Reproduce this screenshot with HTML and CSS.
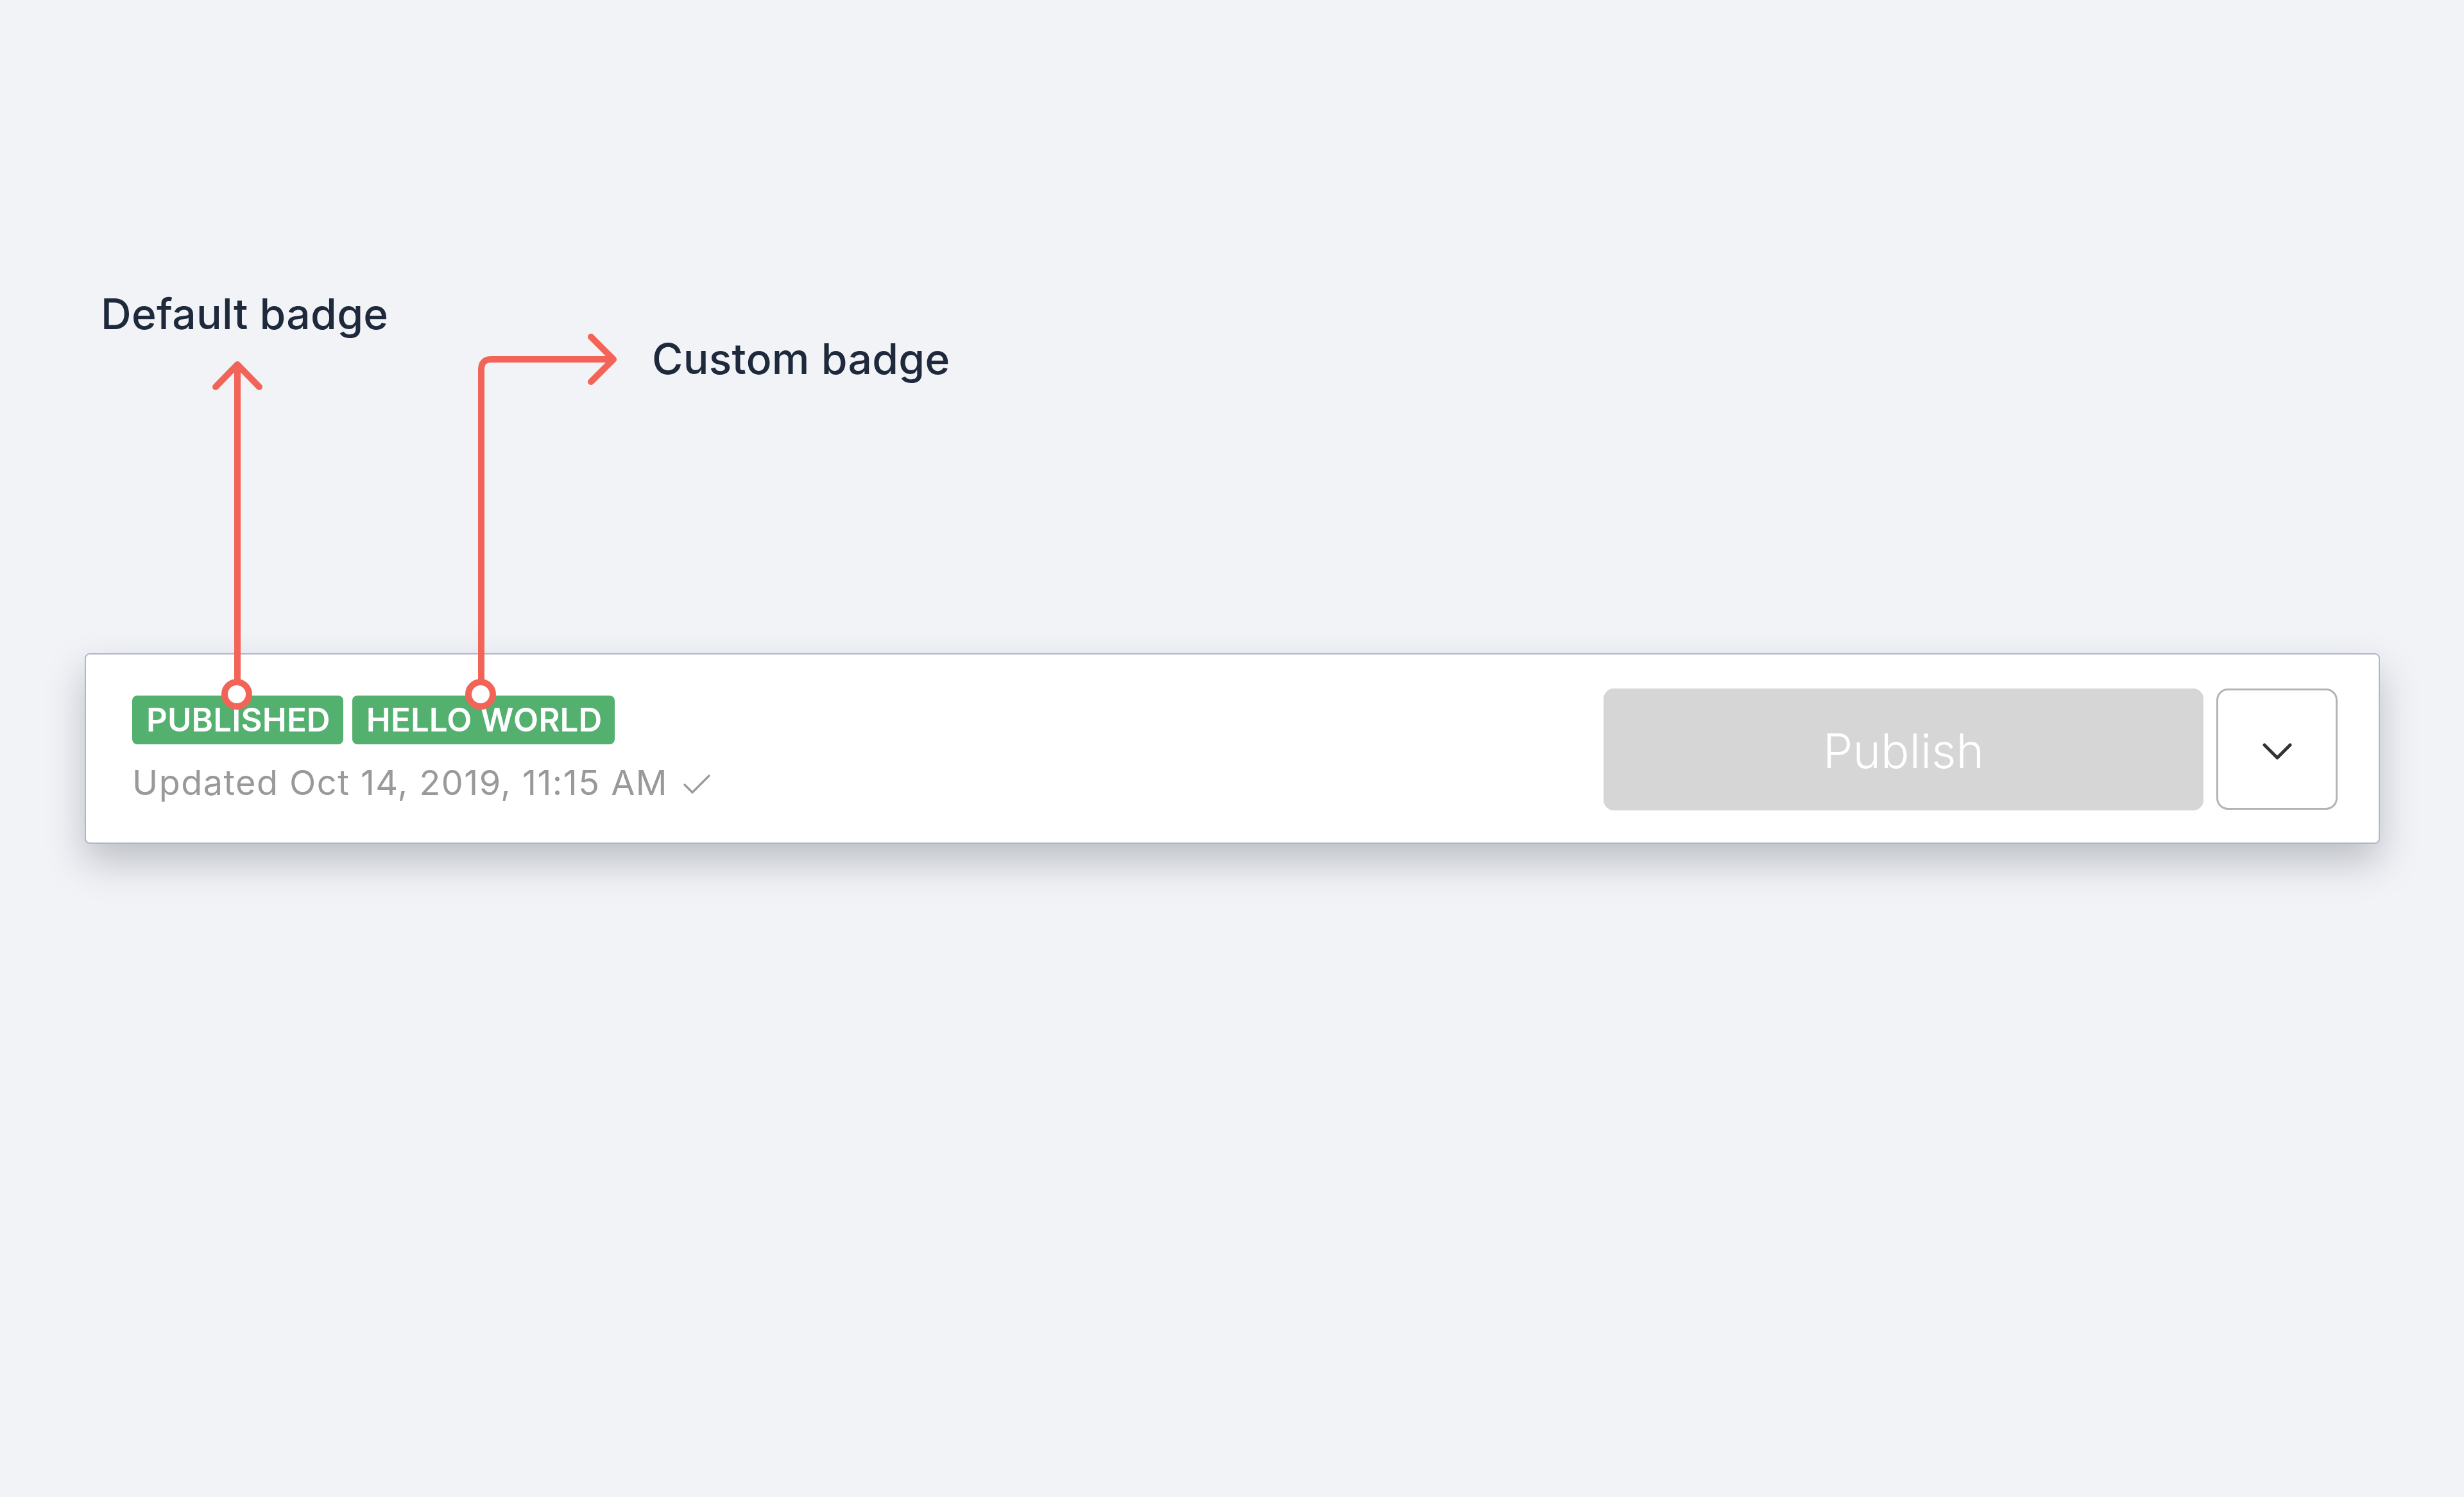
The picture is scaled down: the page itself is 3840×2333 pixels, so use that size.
FILE: index.html
```html
<!DOCTYPE html>
<html lang="en">
<head>
<meta charset="utf-8">
<title>Badges</title>
<link rel="stylesheet" href="styles.css">
</head>
<body>
<main class="canvas">
  <section class="toolbar">
    <div class="status">
      <div class="badges">
        <span class="badge">PUBLISHED</span>
        <span class="badge">HELLO WORLD</span>
      </div>
      <div class="updated">Updated Oct 14, 2019, 11:15 AM<svg class="check" width="44" height="32" viewBox="0 0 44 32"><polyline points="4,17 16,29 42,3" fill="none" stroke="#9a9a9a" stroke-width="3.2" stroke-linecap="round" stroke-linejoin="round"/></svg></div>
    </div>
    <div class="actions">
      <button class="publish" type="button">Publish</button>
      <button class="more" type="button" aria-label="More options"><svg width="48" height="28" viewBox="0 0 48 28"><polyline points="4,4 24,24 44,4" fill="none" stroke="#333" stroke-width="5" stroke-linecap="round" stroke-linejoin="round"/></svg></button>
    </div>
  </section>

  <div class="annotations">
    <span class="label label-default">Default badge</span>
    <span class="label label-custom">Custom badge</span>
    <svg class="arrows" width="3840" height="2333" viewBox="0 0 3840 2333">
      <g fill="none" stroke="#f26457" stroke-width="10" stroke-linecap="round" stroke-linejoin="round">
        <path d="M370 1064 V570"/>
        <polyline points="336,603 370,568 404,603"/>
        <path d="M750 1064 V576 Q750 560 766 560 H955"/>
        <polyline points="921,525 956,560 921,595"/>
      </g>
      <g fill="#fff" stroke="#f26457" stroke-width="10">
        <circle cx="369" cy="1082" r="19"/>
        <circle cx="749" cy="1082" r="19"/>
      </g>
    </svg>
  </div>
</main>
</body>
</html>
```
FILE: styles.css
```css
html, body {
  margin: 0;
  padding: 0;
}
body {
  background: #f1f3f7;
  font-family: Inter, "Noto Sans", "Liberation Sans", sans-serif;
}
.canvas {
  position: relative;
  width: 3840px;
  height: 2333px;
  box-sizing: border-box;
  padding: 1018px 131px 0 132px;
}
.toolbar {
  height: 297px;
  box-sizing: border-box;
  background: #fff;
  border: 2px solid #aab8cc;
  border-radius: 8px;
  box-shadow: 0 28px 60px rgba(40, 44, 56, 0.26);
  display: flex;
  align-items: center;
  justify-content: space-between;
  padding: 3px 64px 0 72px;
}
.status {
  display: flex;
  flex-direction: column;
}
.badges {
  display: flex;
  gap: 14px;
}
.badge {
  display: inline-block;
  background: #53b06f;
  color: #fff;
  font-weight: 600;
  font-size: 51px;
  line-height: 76px;
  height: 76px;
  padding: 0 20px 0 22px;
  border-radius: 8px;
  letter-spacing: 0.1px;
}
.updated {
  margin-top: 28px;
  color: #999;
  font-size: 54px;
  line-height: 64px;
  letter-spacing: 1.45px;
  display: flex;
  align-items: center;
}
.check {
  margin-left: 22px;
  margin-top: 4px;
}
.actions {
  display: flex;
  gap: 20px;
}
.publish {
  width: 935px;
  height: 190px;
  border: none;
  border-radius: 16px;
  background: #d6d6d6;
  color: #fff;
  font-family: Inter, "Noto Sans", "Liberation Sans", sans-serif;
  font-weight: 300;
  font-size: 74px;
  padding: 4px 0 0;
}
.more {
  width: 189px;
  height: 189px;
  box-sizing: border-box;
  border: 3px solid #b4b4b4;
  border-radius: 18px;
  background: #fff;
  display: flex;
  align-items: center;
  justify-content: center;
  padding: 0;
}
.more svg {
  display: block;
  margin-top: 6px;
}
.annotations {
  position: absolute;
  inset: 0;
  pointer-events: none;
}
.arrows {
  position: absolute;
  left: 0;
  top: 0;
}
.label {
  position: absolute;
  font-size: 66px;
  line-height: 66px;
  font-weight: 500;
  color: #1e293b;
  white-space: nowrap;
  letter-spacing: 0.3px;
}
.label-default {
  left: 157px;
  top: 456px;
}
.label-custom {
  left: 1016px;
  top: 526px;
}
```
